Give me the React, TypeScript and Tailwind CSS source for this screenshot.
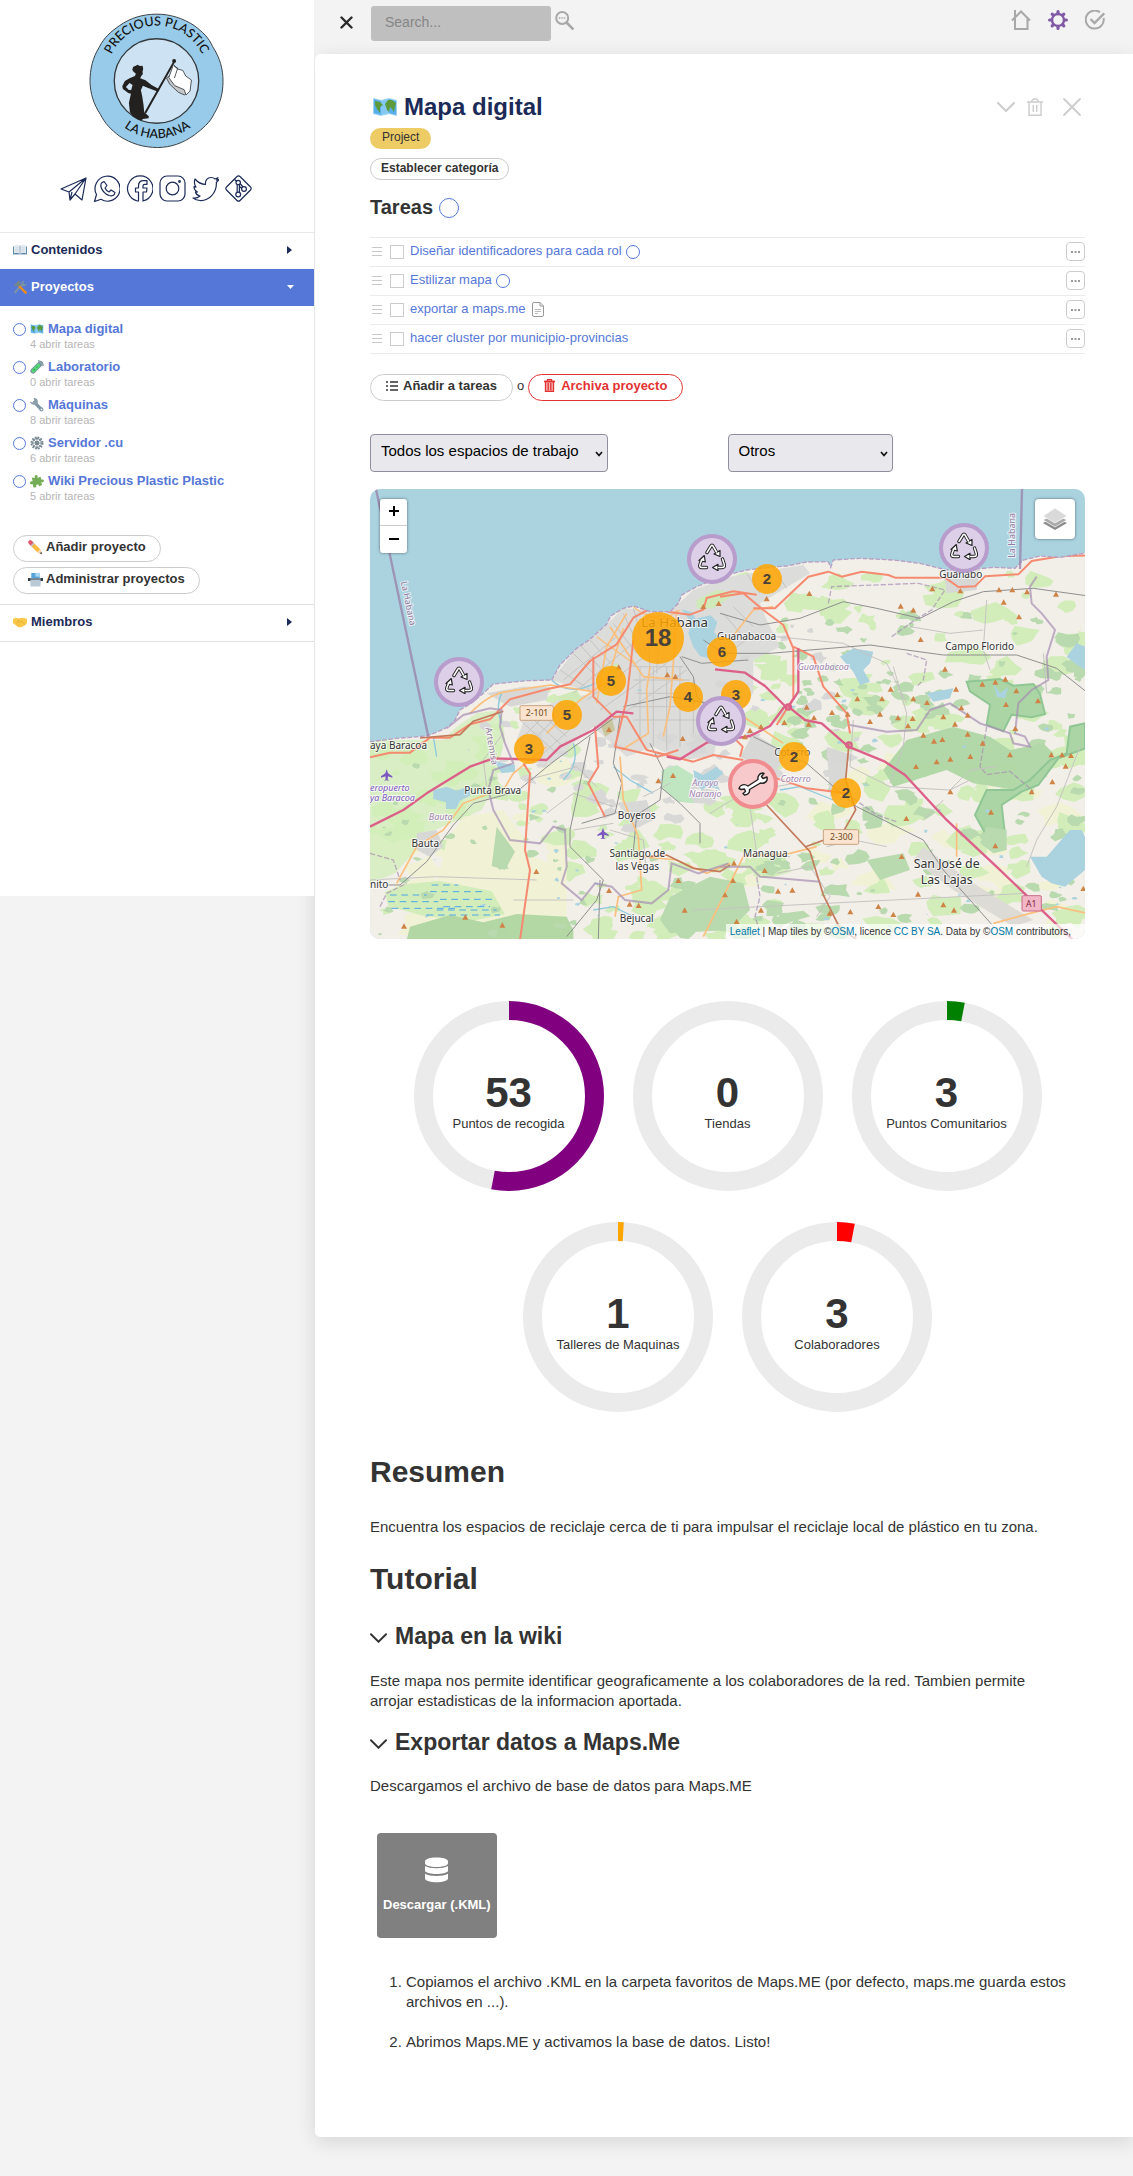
import React from "react";

type IconProps = { className?: string };

/* ---------- Emoji style icons ---------- */

const MapEmoji = ({ className = "size-[14px]" }: IconProps) => (
  <svg viewBox="0 0 26 22" className={className} aria-hidden="true">
    <path d="M1 2l8 2 8-2 8 2v16l-8-2-8 2-8-2z" fill="#9cd5f3" />
    <path d="M2 3l7 2v14l-7-2zM17 3l7 2v14l-7-2z" fill="#58aeea" />
    <path d="M9 5l8-2v14l-8 2z" fill="#86c8f4" />
    <path d="M3 5l5 1 3 3-3 2 0 6-3-4-2-4zM13 8l3-4 4 0 4 3-1 4-1 5-2-3-2-2-1 5-2-2z" fill="#5c9a3c" />
  </svg>
);

const BookEmoji = () => (
  <svg viewBox="0 0 16 14" className="h-[14px] w-[14px]" aria-hidden="true">
    <path d="M0 3h16v9H0z" fill="#4d7d9e" />
    <path d="M1 2c3-1.500 5-1 7 0 2-1 4-1.500 7 0v9c-3-1-5-.5-7 .5-2-1-4-1.500-7-.5z" fill="#e3eaf0" />
    <path d="M8 2v9.500" stroke="#93a6b6" />
    <path d="M2.500 4.500h4M2.500 6.500h4M2.500 8.500h4M9.500 4.500h4M9.500 6.500h4M9.500 8.500h4" stroke="#c4d0da" strokeWidth=".7" />
  </svg>
);

const ToolsEmoji = () => (
  <svg viewBox="0 0 16 16" className="size-[14px]" aria-hidden="true">
    <path d="M3 13l8-8" stroke="#7d95a3" strokeWidth="2.400" />
    <path d="M13 1a3 3 0 0 0-3 4l2 2a3 3 0 0 0 3.500-3.500L13.500 5 11.500 4z" fill="#7d95a3" />
    <path d="M1 14.500l2-3 2 2-3 2z" fill="#7d95a3" />
    <path d="M6 6l8.500 8.500" stroke="#f08d1c" strokeWidth="2.800" strokeLinecap="round" />
    <path d="M1 6l5-5 4 1-2 1.500 1 2L6 8 4 6 2.500 7.500z" fill="#75868d" />
  </svg>
);

const TubeEmoji = () => (
  <svg viewBox="0 0 16 16" className="size-[14px]" aria-hidden="true">
    <path d="M3.500 12.500l8.500-8.500" stroke="#76919b" strokeWidth="6" strokeLinecap="round" />
    <path d="M3.800 12.200l6-6" stroke="#55d878" strokeWidth="4" strokeLinecap="round" />
    <path d="M10 1l5 5" stroke="#8fa4ac" strokeWidth="2" strokeLinecap="round" />
    <circle cx="5" cy="11" r="1" fill="#28a64e" />
    <circle cx="8" cy="8" r=".8" fill="#28a64e" />
  </svg>
);

const WrenchEmoji = () => (
  <svg viewBox="0 0 16 16" className="size-[14px]" aria-hidden="true">
    <path d="M5 5l8 8" stroke="#7e96a5" strokeWidth="3.600" strokeLinecap="round" />
    <path d="M0 4l3 1 2-2-1-3c4-.5 6 3 4.500 6.500C5 9 .5 7.500 0 4z" fill="#8ca0ac" />
    <circle cx="13" cy="13" r="2.400" fill="#8ca0ac" />
    <circle cx="13.200" cy="13.200" r=".9" fill="#fff" />
  </svg>
);

const GearEmoji = () => (
  <svg viewBox="0 0 16 16" className="size-[14px]" aria-hidden="true" stroke="#738590" fill="none">
    <circle cx="8" cy="8" r="5" strokeWidth="1.200" />
    <circle cx="8" cy="8" r="1.800" fill="#738590" />
    <path d="M8 1v14M1 8h14M3 3l10 10M13 3L3 13" strokeWidth="1" />
    <circle cx="8" cy="8" r="6.600" strokeWidth="1.600" strokeDasharray="2 1.450" />
  </svg>
);

const PuzzleEmoji = () => (
  <svg viewBox="0 0 16 16" className="size-[14px]" aria-hidden="true">
    <path d="M2 4l3.500.5C5 2 6 1 7.500 1.200 9 1.500 9 3 8.500 4.500L12 3l1 3.500c2-.8 3 0 2.800 1.500-.3 1.500-1.500 1.700-3 1l1 3.500-3.300 1.500c-.5-2-2-2.500-3-1.500s-.5 2.500.5 2.700L4 15.500l-1-4c-1.500.5-3 .2-3-1.300S1.500 8 3 8.500z" fill="#74ad56" />
  </svg>
);

const PencilEmoji = () => (
  <svg viewBox="0 0 16 16" className="size-[15px]" aria-hidden="true">
    <path d="M2.500 2.500l2 2" stroke="#e5586a" strokeWidth="4.500" strokeLinecap="round" />
    <path d="M4.300 4.300l1.400 1.400" stroke="#b9c4cc" strokeWidth="4.500" />
    <path d="M5.500 5.500l6 6" stroke="#f7b93e" strokeWidth="4.500" />
    <path d="M13.500 9.500L15 15l-5.500-1.500z" fill="#f5d5b0" />
    <path d="M14.300 12.500L15 15l-2.500-.7z" fill="#444" />
  </svg>
);

const CardEmoji = () => (
  <svg viewBox="0 0 16 16" className="size-[15px]" aria-hidden="true">
    <path d="M3.500 1h9v6h-9z" fill="#56a4d9" />
    <path d="M8 1h4.500v4H8z" fill="#a9d8f4" />
    <path d="M2 7h12l-.8 8.500H2.800z" fill="#b9c9d6" />
    <path d="M0 6.500h2.500v3H0zM13.500 6.500H16v3h-2.500z" fill="#2f3d46" />
    <path d="M2 7.500h12" stroke="#2f3d46" />
  </svg>
);

const HandshakeEmoji = () => (
  <svg viewBox="0 0 16 16" className="size-[14px]" aria-hidden="true">
    <path d="M0 4.500l3-1.500 4 1 3-1 3 .3 3 1.200V9l-2 2.500-4 2.500H6l-3.500-3L0 9.500z" fill="#fbc84a" />
    <path d="M7 5L5 8l2 .5L9.500 7l4 4M3.500 10.500l1.500-1M5.500 12.500l1.500-1.500" stroke="#e0a02c" strokeWidth=".8" fill="none" />
  </svg>
);

/* ---------- Logo ---------- */

const Logo = () => (
  <svg viewBox="266 40 406 408" className="h-[136px] w-[135px]" role="img" aria-label="Precious Plastic La Habana">
    <path
      d="M470 43c40 0 78 12 112 34 26 20 44 36 56 64 22 34 31 66 31 104 0 36-8 66-27 98-12 26-34 44-60 64-34 24-70 37-110 37-42 0-80-12-114-34-26-20-44-38-58-66-20-30-30-62-31-98 0-38 8-72 28-104 14-28 34-46 60-64 34-24 71-35 113-35z"
      fill="#98cbe9"
      stroke="#3c4246"
      strokeWidth="3"
    />
    <circle cx="469" cy="244" r="127" fill="#cde3f3" stroke="#33383c" strokeWidth="4" />
    <path id="logo-top" d="M322 200A150 150 0 0 1 617 200" fill="none" />
    <path id="logo-bottom" d="M345 361A173 173 0 0 0 598 361" fill="none" />
    <text fontFamily="Lato, 'Open Sans', sans-serif" fontSize="38" fontWeight="500" fill="#111" textAnchor="middle">
      <textPath href="#logo-top" startOffset="50%">PRECIOUS PLASTIC</textPath>
    </text>
    <text fontFamily="Lato, 'Open Sans', sans-serif" fontSize="38" fontWeight="500" fill="#111" textAnchor="middle">
      <textPath href="#logo-bottom" startOffset="50%">LA HABANA</textPath>
    </text>
    <path
      d="M396 210L399 201 407 198 412 195 419 199 427 198 429 207 427 216 428 223 423 229 420 236 436 242 454 256 472 266 478 270 474 276 460 271 442 264 428 258 422 272 426 290 430 316 432 338 446 350 445 356 428 358 424 363 412 360 398 350 389 338 386 310 392 282 384 280 368 268 366 260 374 244 388 236 404 229 407 222 400 216z"
      fill="#232120"
    />
    <path d="M377 262L388 250 397 256 393 271 386 271z" fill="#cde3f3" />
    <path d="M521 188l-86 152" stroke="#232120" strokeWidth="6" />
    <circle cx="522" cy="184" r="6" fill="#232120" />
    <path d="M499 235l13-9 20 6 36 12-2 30-13 12-18-8-26-24z" fill="#c5c8ca" stroke="#33383c" strokeWidth="2.500" />
    <path d="M520 194l12 14 16 4 9 17 17 12-4 33-12 12-6-16-28-12-18-24z" fill="#fff" stroke="#33383c" strokeWidth="2.500" />
    <path d="M522 200l11 5-10 30" fill="none" stroke="#33383c" strokeWidth="2.500" />
  </svg>
);

/* ---------- Social icons ---------- */

const socials = [
  {
    name: "Telegram",
    body: <path d="M1 14L26 3l-4 22-7-6-5 6-1-8zM9 17L26 3 15 19M10 25l2-8" />,
  },
  {
    name: "WhatsApp",
    body: (
      <path d="M1.500 26.500l2-7A12.500 12.500 0 1 1 8 24.300zM8.500 8l2.500-1.500 3 4-2 2.500c.8 1.700 2 3 4 4l2-2 4 2.500c-.5 3-3 4-6 3C12.500 19 9 15.500 8 12c-.3-1.500-.2-3 .5-4z" />
    ),
  },
  {
    name: "Facebook",
    body: (
      <path d="M11.500 26A12.700 12.700 0 1 1 17 26V17h3.500l.5-4h-4v-2c0-1 .5-1.700 1.700-1.700H21V5.700h-3.500C14 5.700 12.500 7.500 12.500 11v2H9.500v4h3v9z" />
    ),
  },
  {
    name: "Instagram",
    body: (
      <>
        <rect x="1" y="1" width="25" height="25" rx="7" />
        <circle cx="13.500" cy="13.500" r="6.300" />
        <circle cx="20.500" cy="6.500" r=".8" />
      </>
    ),
  },
  {
    name: "Twitter",
    body: (
      <path d="M1 23c3 .5 5-.3 7-2-2.500-.5-4-2-4.500-4h2C3.500 16 2 14 2 11.500l2 .6C2.500 10 2 7 3 4c3 3.500 6 5.300 10.500 5.500C13 5 15.500 2.500 19 2.500c1.500 0 3 .5 4 1.500l3-1.300-1.500 2.500L27 4.500c-.8 1.200-1.500 2-2.600 2.800C24.800 18 17 26 8 25.500 5.500 25.300 3 24.500 1 23z" />
    ),
  },
  {
    name: "Git",
    body: (
      <>
        <path d="M12 1.500a2 2 0 0 1 3 0L25.500 12a2 2 0 0 1 0 3L15 25.500a2 2 0 0 1-3 0L1.500 15a2 2 0 0 1 0-3z" />
        <path d="M12.200 9.500v7.700M14.400 9.500v7.700M15 8.500l3 3.500M14.500 11.500l2.500 2M9.500 4.500l2.500 2" />
        <circle cx="13.200" cy="7.500" r="2.200" />
        <circle cx="13.200" cy="19.500" r="2.400" />
        <circle cx="19" cy="14" r="2.400" />
      </>
    ),
  },
];

/* ---------- Small UI icons ---------- */

const Ring = ({ className = "" }: IconProps) => (
  <span className={`inline-block shrink-0 rounded-full border border-[#5577d8] ${className}`} />
);

const TrashIcon = ({ className = "" }: IconProps) => (
  <svg viewBox="0 0 16 18" className={className} fill="none" stroke="currentColor" strokeWidth="1.400" aria-hidden="true">
    <path d="M0 4h16M2 4v13.200h12V4M5 4V2.500L6.500 1h3L11 2.500V4M6.300 7v7M9.700 7v7" />
  </svg>
);

const ChevronDown = ({ className = "" }: IconProps) => (
  <svg viewBox="0 0 18 10" className={className} fill="none" stroke="currentColor" strokeWidth="2" strokeLinecap="round" aria-hidden="true">
    <path d="M1 1l8 8 8-8" />
  </svg>
);

/* ---------- Sidebar ---------- */

const projects = [
  { icon: <MapEmoji />, name: "Mapa digital", open: 4 },
  { icon: <TubeEmoji />, name: "Laboratorio", open: 0 },
  { icon: <WrenchEmoji />, name: "Máquinas", open: 8 },
  { icon: <GearEmoji />, name: "Servidor .cu", open: 6 },
  { icon: <PuzzleEmoji />, name: "Wiki Precious Plastic Plastic", open: 5 },
];

const Sidebar = () => (
  <aside className="relative z-10 min-h-[896px] w-[314px] shrink-0 self-start bg-white pt-[13px] text-[13px] font-bold">
    <div className="flex justify-center pr-[2px]">
      <Logo />
    </div>
    <nav className="mt-[26px] flex justify-center gap-[6px] pr-[2px]" aria-label="Redes sociales">
      {socials.map((s) => (
        <a key={s.name} href="#" aria-label={s.name}>
          <svg viewBox="0 0 27 27" className="size-[27px]" fill="none" stroke="#1b2a57" strokeWidth="1.200" strokeLinejoin="round">
            {s.body}
          </svg>
        </a>
      ))}
    </nav>
    <button className="mt-[30px] flex h-[37px] w-full items-center gap-1 border-t border-[#e8e8e8] pb-[2px] pl-[13px] pr-[22px] text-[#1b2a57]">
      <BookEmoji />
      Contenidos
      <svg viewBox="0 0 5 8" className="ml-auto h-2 w-[5px]" fill="currentColor" aria-hidden="true"><path d="M0 0l5 4-5 4z" /></svg>
    </button>
    <button className="flex h-[37px] w-full items-center gap-1 bg-[#5577d8] pb-[2px] pl-[13px] pr-5 text-white">
      <ToolsEmoji />
      Proyectos
      <svg viewBox="0 0 7 4" className="ml-auto h-1 w-[7px]" fill="currentColor" aria-hidden="true"><path d="M0 0h7l-3.500 4z" /></svg>
    </button>
    <ul className="mt-[15px] flex flex-col gap-2 pl-[13px]">
      {projects.map((p) => (
        <li key={p.name} className="flex gap-1">
          <Ring className="mt-[2px] size-[13px]" />
          <div>
            <a href="#" className="flex items-center gap-1 leading-4 text-[#5577d8]">
              {p.icon}
              {p.name}
            </a>
            <p className="text-[11px] leading-[14px] font-normal text-[#b5b5b5]">{p.open} abrir tareas</p>
          </div>
        </li>
      ))}
    </ul>
    <div className="mt-8 flex flex-col items-start gap-[5px] pb-[10px] pl-[13px] text-[#333]">
      <button className="flex h-[27px] items-center gap-[3px] rounded-full border border-[#ccc] px-[14px] pb-[3px]">
        <PencilEmoji />
        Añadir proyecto
      </button>
      <button className="flex h-[27px] items-center gap-[3px] rounded-full border border-[#ccc] px-[14px] pb-[3px]">
        <CardEmoji />
        Administrar proyectos
      </button>
    </div>
    <button className="flex h-[38px] w-full items-center gap-1 border-y border-[#e0e0e0] pb-[2px] pl-[13px] pr-[22px] text-[#1b2a57]">
      <HandshakeEmoji />
      Miembros
      <svg viewBox="0 0 5 8" className="ml-auto h-2 w-[5px]" fill="currentColor" aria-hidden="true"><path d="M0 0l5 4-5 4z" /></svg>
    </button>
  </aside>
);

/* ---------- Top bar ---------- */

const TopBar = () => (
  <header className="flex h-[54px] items-start pr-7 pl-[25px]">
    <button aria-label="Cerrar menú" className="mt-4">
      <svg viewBox="0 0 13 13" className="size-[13px]" stroke="#2b2b2b" strokeWidth="2.400" strokeLinecap="round"><path d="M1.500 1.500l10 10M11.500 1.500l-10 10" /></svg>
    </button>
    <input
      type="search"
      aria-label="Search"
      placeholder="Search..."
      className="mt-[6px] ml-[18px] h-[35px] w-[180px] rounded-[3px] bg-[#bfbfbf] px-[14px] pb-1 text-[14px] placeholder:text-[#858585]"
    />
    <button aria-label="Buscar" className="mt-[11px] ml-1">
      <svg viewBox="0 0 19 19" className="size-[19px]" fill="none" stroke="#a8a8a8" strokeWidth="2">
        <circle cx="7.200" cy="7" r="6" />
        <path d="M11.500 11.500l7 7" strokeWidth="2.600" />
        <path d="M3.800 7h7" strokeWidth="1.500" strokeDasharray="1.500 1" />
      </svg>
    </button>
    <div className="mt-[10px] ml-auto flex gap-[17px]">
      <button aria-label="Inicio">
        <svg viewBox="0 0 20 20" className="size-5" fill="none" stroke="#a8a8a8" strokeWidth="2"><path d="M1 10.500L10 1.500l9 9M4 8.500V19h12.500V8.500M4 9V0" /></svg>
      </button>
      <button aria-label="Ajustes">
        <svg viewBox="0 0 20 20" className="size-5" fill="none" stroke="#8159a6">
          <circle cx="10" cy="10" r="6" strokeWidth="2.400" />
          <g strokeWidth="3.200" strokeLinecap="round">
            <path d="M10 1.600v2M10 16.400v2M1.600 10h2M16.400 10h2M4.200 4.200l1 1M14.800 14.800l1 1M15.800 4.200l-1 1M5.200 14.800l-1 1" />
          </g>
        </svg>
      </button>
      <button aria-label="Tareas">
        <svg viewBox="0 0 20 20" className="size-5" fill="none" stroke="#a8a8a8" strokeWidth="2">
          <path d="M15 2.300A9 9 0 1 0 18.600 8" />
          <path d="M5.500 9l4 4L19.300 3.300" strokeWidth="2.400" />
        </svg>
      </button>
    </div>
  </header>
);

/* ---------- Tasks ---------- */

const tasks = [
  { text: "Diseñar identificadores para cada rol", mark: "ring" },
  { text: "Estilizar mapa", mark: "ring" },
  { text: "exportar a maps.me", mark: "doc" },
  { text: "hacer cluster por municipio-provincias", mark: "" },
];

const TaskList = () => (
  <ul className="mt-[14px] border-t border-[#ebebeb]">
    {tasks.map((t, i) => (
      <li key={t.text} className="flex h-[29px] items-center border-b border-[#ebebeb] pb-px pl-[2px]">
        <svg viewBox="0 0 10 9" className="h-[9px] w-[10px] text-[#c8c8c8]" stroke="currentColor" aria-hidden="true"><path d="M0 .5h10M0 4.500h10M0 8.500h10" /></svg>
        <input id={`task-${i}`} type="checkbox" className="mr-[6px] ml-2 size-[14px] appearance-none border border-[#ccc]" />
        <label htmlFor={`task-${i}`} className="pb-[2px] text-[13px] text-[#5577d8]">{t.text}</label>
        {t.mark === "ring" && <Ring className="ml-1 size-[14px]" />}
        {t.mark === "doc" && (
          <svg viewBox="0 0 12 15" className="ml-[6px] h-[15px] w-3" fill="none" stroke="#999" aria-hidden="true">
            <path d="M2 .5h6l3.500 3.500v9a1.500 1.500 0 0 1-1.500 1.500H2A1.500 1.500 0 0 1 .5 13V2A1.500 1.500 0 0 1 2 .5zM8 .5V4h3.500" />
            <path d="M3 7.500h6M3 9.500h6M3 11.500h3" stroke="#aaa" strokeWidth=".8" />
          </svg>
        )}
        <button aria-label="Más opciones" className="ml-auto flex size-[19px] items-center justify-center rounded-[4px] border border-[#ccc]">
          <svg viewBox="0 0 9 2" className="h-[2px] w-[9px]" fill="#999"><path d="M0 0h2v2H0zM3.500 0h2v2h-2zM7 0h2v2H7z" /></svg>
        </button>
      </li>
    ))}
  </ul>
);

const SelectBox = ({ id, label, options, className }: { id: string; label: string; options: string[]; className: string }) => (
  <div className={`relative ${className}`}>
    <label htmlFor={id} className="sr-only">{label}</label>
    <select id={id} className="h-[38px] w-full appearance-none rounded-[4px] border border-[#8f8f9d] bg-[#e9e9ed] pr-5 pb-1 pl-[10px] text-[15px] text-black">
      {options.map((o) => <option key={o}>{o}</option>)}
    </select>
    <svg viewBox="0 0 8 6" className="pointer-events-none absolute top-[17px] right-[5px] h-[6px] w-2" fill="none" stroke="#111" strokeWidth="1.700" aria-hidden="true"><path d="M1 1l3 3.500L7 1" /></svg>
  </div>
);

/* ---------- Map ---------- */

/* Deterministic generator for the small vegetation and field patches. */
const makeRandom = (seed: number) => () => {
  seed = (seed * 16807) % 2147483647;
  return seed / 2147483647;
};

const blob = (rnd: () => number, x: number, y: number, r: number) => {
  const pts: string[] = [];
  const n = 9;
  for (let i = 0; i < n; i++) {
    const a = (i / n) * Math.PI * 2;
    const k = r * (0.45 + rnd() * 0.75);
    pts.push(`${Math.round(x + Math.cos(a) * k * 1.3)} ${Math.round(y + Math.sin(a) * k * 0.8)}`);
  }
  return `M${pts.join("L")}z`;
};

const scatter = (seed: number, count: number, x0: number, y0: number, x1: number, y1: number, r0: number, r1: number) => {
  const rnd = makeRandom(seed);
  let d = "";
  for (let i = 0; i < count; i++) {
    const x = x0 + rnd() * (x1 - x0);
    const y = y0 + rnd() * (y1 - y0);
    d += blob(rnd, x, y, r0 + rnd() * (r1 - r0));
  }
  return d;
};

const meadows =
  scatter(11, 60, 30, 780, 700, 1377, 12, 52) +
  scatter(23, 150, 1150, 270, 2175, 1377, 12, 50) +
  scatter(31, 60, 700, 930, 1250, 1377, 12, 42) +
  scatter(37, 14, 400, 620, 640, 760, 8, 22);
const fields = scatter(41, 20, 100, 880, 640, 1377, 25, 75) + scatter(43, 22, 1150, 850, 2175, 1377, 22, 60);
const woods =
  scatter(53, 34, 60, 850, 700, 1377, 5, 18) +
  scatter(59, 110, 1250, 380, 2175, 1377, 6, 28) +
  scatter(61, 26, 880, 1130, 1450, 1377, 10, 38) +
  scatter(67, 26, 1300, 560, 1800, 760, 8, 26);
const suburbs = scatter(71, 34, 650, 760, 1080, 1050, 8, 32) + scatter(73, 24, 1080, 430, 1500, 900, 6, 24) + scatter(79, 14, 380, 600, 650, 950, 8, 24);
const ponds = scatter(83, 50, 200, 620, 2150, 1370, 2, 8);

const COAST =
  "M10 788L110 775 150 772 200 768 240 752 265 740 285 720 300 690 330 672 370 640 400 612 440 608 500 602 575 600 600 555 650 505 690 478 740 432 752 408 790 385 822 378 870 395 930 395 955 370 965 345 1010 320 1060 300 1100 285 1160 270 1225 262 1280 258 1340 246 1405 245 1412 262 1420 240 1500 235 1600 240 1680 250 1760 270 1840 268 1900 262 1965 265 1990 240 2040 228 2100 232 2195 216";
const LAND = `${COAST}V1400H10z`;

const peaks: [number, number][] = [
  [1030, 380], [1076, 371], [922, 585], [946, 590], [776, 562], [968, 776], [939, 887], [895, 903], [747, 749], [529, 1175], [316, 1312], [132, 1339], [427, 1336],
  [747, 1232], [809, 1273], [836, 1277], [955, 1202], [974, 1291], [1095, 1245], [1220, 357], [1348, 341], [1622, 379], [1660, 391], [1717, 327], [1801, 333],
  [1917, 330], [1957, 330], [2001, 336], [2088, 343], [1931, 367], [1977, 411], [1682, 479], [1755, 568], [1592, 628], [1432, 644], [1492, 657], [1566, 657],
  [1660, 657], [1701, 668], [1788, 628], [1867, 613], [1906, 607], [1936, 598], [1969, 633], [2034, 663], [1938, 674], [1804, 684], [1823, 706], [1750, 711],
  [1785, 733], [1560, 703], [1614, 714], [1658, 716], [1644, 738], [1530, 725], [1463, 703], [1416, 698], [1362, 714], [1346, 733], [1340, 682], [1273, 728],
  [1203, 741], [1170, 752], [1155, 771], [1690, 766], [1722, 784], [1747, 779], [1823, 763], [1868, 790], [1966, 746], [1831, 830], [1771, 838], [1730, 846],
  [1668, 860], [1950, 825], [2074, 825], [2106, 825], [2133, 827], [2117, 859], [2077, 906], [2015, 936], [1893, 997], [1906, 1098], [1771, 936], [1639, 1016],
  [1625, 1130], [1122, 1150], [1119, 1202], [1214, 1172], [1254, 1234], [1297, 1231], [1674, 1243], [1555, 1280], [1600, 1304], [1750, 1275], [1782, 1291],
  [1471, 1296], [1409, 1300], [1203, 1291], [1130, 1325], [2170, 1226],
];

const MapDrawing = () => (
  <svg viewBox="30 27 2145 1350" preserveAspectRatio="xMidYMid slice" className="absolute inset-0 size-full" role="img" aria-label="Mapa de La Habana">
    <defs>
      <clipPath id="land"><path d={LAND} /></clipPath>
    </defs>
    <rect x="30" y="27" width="2145" height="1350" fill="#aad3df" />
    <path d={LAND} fill="#f2efe9" />
    <g clipPath="url(#land)">
      <path d={fields} fill="#f1f2d5" />
      <path d={meadows} fill="#d2edba" />
      <path d="M30 780h220l40-40 60-40 75-10 10 90-30 60 10 60-50 90-140 60-120 130-75 30z" fill="#d2edba" opacity=".75" />
      <path d="M310 1010l120-20 60 80 20 60 60 20 50-60v240H180l60-160 20-90z" fill="#f1f2d5" />
      <path d="M410 1040l55 75-30 55-40-12z" fill="#b9d9af" />
      <path d="M75 1235l60-22 100-10 160 30 40 70-90 18-150-12-110-30z" fill="#d2edba" />
      <path d="M150 1340l120-35 100 22 100-25 150 8 20 40v30H140z" fill="#b3d8a4" />
      <path d={woods} fill="#b9d9af" />

      {/* Built-up area */}
      <path
        d="M575 600L650 505 740 432 790 385 930 395 1000 330 1110 290 1330 255 1350 280 1200 370 1220 420 1260 500 1180 540 1180 640 1140 700 1080 740 1060 830 960 840 880 800 800 830 700 740 640 790 580 850 500 850 470 780 500 700 600 660 700 640z"
        fill="#dcdcda"
      />
      <path d={suburbs} fill="#d8d8d7" />
      <path d="M380 640l110-20 80 0-10 40-110 20z M170 1060l60-10 20 50-40 30-40-20z M1750 270l110 0-10 60-90 10z M780 970l80-10 20 60-60 30z M1400 800l60 20 0 120-50 10z M1180 760l100 60-40 70-100-60z" fill="#d8d8d6" />
      <path d="M1690 1100l150 110 180 110-60 20-180-110-120-90z" fill="#dddbd5" />
      <path d="M590 650l60-20 20 30-50 20zM735 560l40-10-5 80-40 20zM1010 360l60-30 60 10-70 45-50 0z" fill="#cfe9b8" />

      {/* Parks and protected areas */}
      <path d="M905 870l45-15 50 30-15 60 20 25-50-5-50-40z" fill="#bfe6c0" />
      <path d="M720 730l35-15 10 35-30 20z" fill="#c9c69d" />
      <path d="M1640 780l140-40 110 30 60 40 100-20 30 30-20 70-90 40-130-20-80-40-160 50-30-50z" fill="#b3d8a8" />
      <g fill="#abd5a4" stroke="#90c695" strokeWidth="6">
        <path d="M1820 605l100-8 40 20 60-5 20 30 15 60-40 10-60-8-25 50-50-20 10-60-60-40z" />
        <path d="M1880 930l80 0 50-30 60-60 50-20 10-80 45-10v75l-80 30-60 80-50 20-60 40 10 90-40 30-50-90z" />
      </g>
      <path d="M1880 1040l60 10 0 60-40 10-40-30z M1520 1140l110-20 20 50-90 30z M930 1250l120-60 100 20 20 80-60 60-180 10-30-40z" fill="#b9d9af" />

      {/* Water */}
      <g fill="#aad3df">
        <path d="M965 388l30 8 12 20 45-10 20 20-10 30 18 20-40 20 10 40-30-8-20-28-15-40 10-30z" />
        <path d="M220 930l40-10 30 12 40-15 0 30-30 15-12 25-30 0 0-20-38-10z" />
        <path d="M400 840l30 10 35 5 0 20-40 5z" />
        <path d="M1000 870l30 15 40-25 20 20-25 20 15 30-35-12-20 12-20-25z" />
        <path d="M1440 530l40-25 60 10-10 35-20 20 20 35-30 10-20-40z" />
        <path d="M1700 640l80-15-10 30-50 10zM1900 610l20 30 25-20-10 35-25-5z" />
        <path d="M2120 530l30-40 25 10v70l-30-20z" />
        <path d="M2010 1130l50 0 70-80 35 0 10 20v100l-60 50-40-10-30-20z" />
        <path d={ponds} />
      </g>
      <g stroke="#4fa8e8" strokeWidth="3" strokeDasharray="20 14">
        <path d="M90 1245h110M85 1265h150M95 1285h200M215 1215h80M210 1235h160M240 1258h160M250 1280h140M200 1305h220M230 1290h180" />
      </g>
      <path d="M575 600q50 50 130 10M425 640q-20 40 0 90M220 770l10 60M640 790q20 60-30 110M760 860l50 40 70 40M1260 930l60-10 100 40M700 1290l60-10 80 40" fill="none" stroke="#8ec9dd" strokeWidth="4" />

      {/* Street grid */}
      <g fill="none" stroke="#c6c4c2" strokeWidth="3">
        <path d="M640 520l70 70M665 500l70 80M690 480l80 90M600 570l90 60M760 430l70 90M790 400l60 130M820 385l40 140M860 400l10 170M900 400l-10 180M610 600l160-130M640 640l190-160M680 660l200-150M720 690l200-140M760 720l220-150M820 560h150M820 600h170M830 640h150M820 680h180M820 720h200M840 560v220M880 560v240M920 560v250M960 560v240M1000 600v160M1090 400l60 70M1120 380l60 60M1160 280l40 60M1200 270l40 70M1240 265l40 60M1080 540l90-70M480 720l110 100M500 700l110 100M520 680l100 90M490 810l120-120M470 790l100-100M550 820l100-90" />
        <path d="M430 760l-60 80 10 80M500 900l150-40 60 60M560 1000l80-60 120 40M30 1200l200-10 300 10M640 1050l120-20M850 950l80-40M1050 1000l100-60 150-30M1170 980l20 140 100 10M1250 470l200 20 130 60 60 120M1480 720l-10 140 120 60 180 10 60-30M1880 360l-10 150 20 60M2050 520l10 120M2160 800l-70 180-60 100-30 80M1600 560l40 140-10 100-40 110M1650 440l120 20 100-10M1250 1180l100-20 60 90-40 60M1400 1100l80-20 100 20M1770 930l60-60 80-10M1690 1020l60-60M750 1050l100 30 10 100M1000 1290l1000-50M460 1260h180" />
      </g>

      {/* Railways */}
      <g fill="none" stroke="#8f8f8f" strokeWidth="3">
        <path d="M80 1215h40l80-70 80-110 60-65 130-35 110-90 180-130M780 710l-20 140 25 60-20 90-100 30M690 770l-60 280 0 50 100 100-20 60-90 110M720 1200l-5 180M790 680l140-30 120 20 60 90M960 530l40 60 10 60 60 60M965 530l60 20 140-10M1080 400l120 35 120-20 130-50 100 20 130 30 100-50 90-30 150-10 180 25 100 20" />
        <path d="M870 790l40 80-10 90-70 45-10 110M900 920l60 50 60 60 0 60M1030 480l60 40 140 0 300-25 220 30 220 0 120 40 190 150M1180 770l160 80 150 130 200 100 60 90 160 180" />
      </g>

      {/* Secondary and primary roads */}
      <g fill="none" stroke="#fbbf7d" strokeWidth="5">
        <path d="M330 700q60-60 110-65l130-20 130 20 50-60 40-130M560 760l100-100 90-60M800 400l-60 100-30 170M870 560l-10 70 5 130-80 50M780 830l10 130 45 110 10 160-70 20-10 60M110 1210l60-110 80-50 60-80 80-30M430 930l30-50 100-80M950 390l-10 160-10 130-20 90M750 440l100 150 120 10M850 1130l100 10 90 40 70-30M1110 480l70-90 60-10M1120 690l90 60 60 40M1030 1370l120-240 140-10 80-20M1790 1030l0 100M1900 1330l110-30 80-20 90 20" />
        <path d="M820 380q70 60 140 10M710 470l110 80" strokeWidth="4" />
      </g>
      <g fill="none" stroke="#f58a70" strokeWidth="6" strokeLinejoin="round">
        <path d="M30 832l60-14 60 0 60-45 60 0 60-40 60-15 60-60 110-30 70-15 60-70 80-50 50-80 60-32 50 15 60 8 40-15 10-35 80-20 70 10M1080 350l70-10 60 50 60 45 30 70 0 150-50 80M700 530l0 120 60 60 40 0 60 100 60 15 80 20 60-20 90 15" />
        <path d="M1180 385l65 0 100-95 60-15 40 15 60-15 80 10 20 8 150 0 40 28 50-2 30-30 100-6 40-40 90-15 80-2M820 480l-20 180-35 140 130 30 60-20M705 740l10 120-30 50 50 100M490 850l20 30-15 230 15 60-20 140-10 70M1300 500l60 30 30 90 70 80 10 60M1250 895l90 30 120 15M1140 830l8-30-30-30" />
      </g>
      <g fill="none" stroke="#c27a5a" strokeWidth="5">
        <path d="M1467 790l-10 110 30 90-40 70-110 40M1220 975l130 140 40 130 50 100 60 40M180 774l120-10 40-40 90-30M860 1130l60-5 80 40 80 10 30-20" />
      </g>
      <g fill="none" stroke="#dc6089" strokeWidth="7" strokeLinejoin="round">
        <path d="M30 1040l100-50 70-50 130-80 70-25 160 5 40-40 100-50 70-55 50 5M920 830l40 8 80-50 130-20 60-30 45-60-60-60-60-40-90-10M1285 680l30-45 0-130M1285 680l50 40 50 10 80 70 110 45 60 40 120 130 160 150 260 250" />
        <circle cx="1285" cy="681" r="8" /><circle cx="1467" cy="795" r="8" />
      </g>

      {/* Municipal boundaries */}
      <g fill="none" stroke="#a78fb3" strokeWidth="6" opacity=".7">
        <path d="M260 745l50-40 80-20 35 5-5 50 15 50 25 60-60 20-15 60 15 60 50 90 90 10 40-50 35 10 5 110-15 50 60 50 40-50 50 10 40 40 80 10 50-40 10-80 80 30 90-30M1470 735l110 20 90-5 40-60 60-20 90 60 90 30 10 30 50 10-15-30-30-10 10-90 40-40 50-30-5-70 25-80-40-50-30-30-5-50 20-30M1080 1160l90 0 30 30 180 15" />
        <path d="M30 1120l70 20 20 60M60 1280l20-40 60-30M1190 1190l10 60-15 60 20 60M1880 740l-20 120 20 24 70-10 70 60M1595 470l70-50 50-30 40-60-80-20-260 10-10 50M1640 520l60 20-10 60-20 20M1480 955l70 50 60 20" strokeDasharray="16 6" strokeWidth="4" />
      </g>
    </g>
    <path d={COAST} fill="none" stroke="#b79fc4" strokeWidth="4" strokeDasharray="14 5" />
    <path d="M48 27L205 770M1986 27l-6 240" fill="none" stroke="#9b84ab" strokeWidth="7" opacity=".8" />
    <path d={peaks.map(([x, y]) => `M${x - 9} ${y + 7}l9-16 9 16z`).join("")} fill="#cf8447" />

    <g fill="#7b57bf">
      <path d="M80 868l4 12 13 9v4l-13-4-1 9 5 4-8-1-8 1 5-4-1-9-13 4v-4l13-9z" />
      <path d="M729 1043l4 12 13 9v4l-13-4-1 9 5 4-8-1-8 1 5-4-1-9-13 4v-4l13-9z" />
    </g>

    {/* Place names */}
    <g fontFamily="'Noto Sans', sans-serif" textAnchor="middle" stroke="#fff" strokeOpacity=".7" strokeWidth="6" paintOrder="stroke" strokeLinejoin="round">
      <g fill="#333" fontSize="30">
        <text x="30" y="807" textAnchor="start">aya Baracoa</text>
        <text x="398" y="943">Punta Brava</text>
        <text x="196" y="1101">Bauta</text>
        <text x="30" y="1224" textAnchor="start">nito</text>
        <text x="830" y="1017">Boyeros</text>
        <text x="832" y="1132">Santiago de</text>
        <text x="832" y="1169">las Vegas</text>
        <text x="830" y="1325">Bejucal</text>
        <text x="1160" y="480">Guanabacoa</text>
        <text x="1297" y="827">Cotorro</text>
        <text x="1216" y="1132">Managua</text>
        <text x="1802" y="294">Guanabo</text>
        <text x="1859" y="509">Campo Florido</text>
      </g>
      <g fill="#333">
        <text x="944" y="442" fontSize="40">La Habana</text>
        <text x="1760" y="1164" fontSize="37">San José de</text>
        <text x="1760" y="1212" fontSize="37">Las Lajas</text>
      </g>
      <g fill="#a283b0" fontSize="27" fontStyle="italic">
        <text x="242" y="1019">Bauta</text>
        <text x="1036" y="918">Arroyo</text>
        <text x="1036" y="950">Naranjo</text>
        <text x="1390" y="571">Guanabacoa</text>
        <text x="1307" y="905">Cotorro</text>
      </g>
      <g fill="#7b57bf" fontSize="27" fontStyle="italic">
        <text x="30" y="932" textAnchor="start">eropuerto</text>
        <text x="30" y="964" textAnchor="start">ya Baracoa</text>
      </g>
      <g fill="#94799f" fontSize="27">
        <text transform="translate(136 372) rotate(78)">La Habana</text>
        <text transform="translate(386 800) rotate(80)">Artemisa</text>
        <text transform="translate(1965 166) rotate(-90)">La Habana</text>
      </g>
    </g>
    <g fontFamily="'Noto Sans', sans-serif" fontSize="26" textAnchor="middle">
      <rect x="480" y="677" width="100" height="44" rx="4" fill="#fae4cf" stroke="#c9a484" strokeWidth="3" />
      <text x="531" y="709" fill="#6d4a20">2-101</text>
      <rect x="1390" y="1049" width="106" height="44" rx="4" fill="#fae4cf" stroke="#c9a484" strokeWidth="3" />
      <text x="1444" y="1081" fill="#6d4a20">2-300</text>
      <rect x="1986" y="1247" width="58" height="46" rx="4" fill="#f1b7c7" stroke="#cb6a8b" strokeWidth="3" />
      <text x="2014" y="1280" fill="#83253f">A1</text>
    </g>
  </svg>
);

const clusters = [
  { x: 288, y: 149, n: 18 },
  { x: 397, y: 90, n: 2 },
  { x: 352, y: 163, n: 6 },
  { x: 241, y: 192, n: 5 },
  { x: 318, y: 208, n: 4 },
  { x: 366, y: 206, n: 3 },
  { x: 197, y: 226, n: 5 },
  { x: 159, y: 260, n: 3 },
  { x: 424, y: 268, n: 2 },
  { x: 476, y: 304, n: 2 },
];

const recyclePins = [
  { x: 89, y: 193 },
  { x: 342, y: 70 },
  { x: 351, y: 232 },
  { x: 594, y: 59 },
];

/* Converts a point of the 715 x 450 map area into percentages. */
const at = (x: number, y: number) => ({ left: `${(x / 715) * 100}%`, top: `${(y / 450) * 100}%` });

const RecycleIcon = () => (
  <svg viewBox="0 0 28 28" className="size-7" strokeLinejoin="round" strokeLinecap="round" aria-hidden="true">
    <g fill="none" stroke="#222" strokeWidth="3.400">
      <path d="M9 9.500L13 3Q14 1.500 15 3L18.500 9M24.500 16L26.300 21.500Q27 24.500 24 24.500H20.500M8.500 24.500H4Q1 24.500 2 21.500L3.500 17.500" />
    </g>
    <g fill="#fff" stroke="#222" strokeWidth="1.200">
      <path d="M16 11L22 7.500 22 13.500zM20 21.300V27.700L14.500 24.500zM1 17.500L7.300 19 6.300 12.500z" />
    </g>
    <g fill="none" stroke="#fff" strokeWidth="1.500">
      <path d="M9 9.500L13 3Q14 1.500 15 3L18.500 9M24.500 16L26.300 21.500Q27 24.500 24 24.500H20.500M8.500 24.500H4Q1 24.500 2 21.500L3.500 17.500" />
    </g>
  </svg>
);

const SpannerIcon = () => (
  <svg viewBox="0 0 32 24" className="h-6 w-8" fill="#fff" stroke="#222" strokeWidth="1.400" strokeLinejoin="round" aria-hidden="true">
    <path d="M11 14l10-6.500c-.5-3 1-6 4.500-6.500L27 1.500l-2.500 3 1.500 2 4-1.500c1 4-2 7-6.500 6L12.500 17.500c.5 3.500-2 5.500-5 5.500L6 21.500l2.500-2-1-2.500-3.500.5-2-1c1-4 5.500-5 9-2.500z" />
  </svg>
);

const LeafletMap = () => (
  <section aria-label="Mapa" className="relative mt-[17px] h-[450px] overflow-hidden rounded-[10px]">
    <MapDrawing />
    {clusters.map((c) => (
      <button
        key={`${c.x}-${c.y}`}
        style={at(c.x, c.y)}
        className={`absolute flex -translate-x-1/2 -translate-y-1/2 items-center justify-center rounded-full bg-[#ffa500]/85 font-bold text-[#4a4238] ${c.n > 9 ? "size-[52px] text-[24px]" : "size-[30px] text-[15px]"}`}
      >
        {c.n}
      </button>
    ))}
    {recyclePins.map((p) => (
      <button
        key={`${p.x}-${p.y}`}
        aria-label="Punto de recogida"
        style={at(p.x, p.y)}
        className="absolute flex size-[50px] -translate-x-1/2 -translate-y-1/2 items-center justify-center rounded-full border-4 border-[#b79ccc] bg-[#dccfe7] pb-1"
      >
        <RecycleIcon />
      </button>
    ))}
    <button
      aria-label="Taller de máquinas"
      style={at(383, 295)}
      className="absolute flex size-[50px] -translate-x-1/2 -translate-y-1/2 items-center justify-center rounded-full border-4 border-[#f08c90] bg-[#f8c9cb]"
    >
      <SpannerIcon />
    </button>
    <div className="absolute top-[10px] left-[10px] flex flex-col overflow-hidden rounded-[3px] bg-white shadow-[0_0_3px_rgba(0,0,0,0.5)]">
      <button aria-label="Acercar" className="flex h-[27px] w-[27px] items-center justify-center border-b border-[#ccc] pb-[2px]">
        <svg viewBox="0 0 10 10" className="size-[10px]" stroke="#000" strokeWidth="2"><path d="M0 5h10M5 0v10" /></svg>
      </button>
      <button aria-label="Alejar" className="flex h-[27px] w-[27px] items-center justify-center pb-[2px]">
        <svg viewBox="0 0 10 10" className="size-[10px]" stroke="#000" strokeWidth="2"><path d="M0 5h10" /></svg>
      </button>
    </div>
    <button aria-label="Capas" className="absolute top-[10px] right-[10px] flex size-10 items-center justify-center rounded-[4px] bg-white shadow-[0_0_3px_rgba(0,0,0,0.5)]">
      <svg viewBox="0 0 26 26" className="size-[26px]" aria-hidden="true">
        <path d="M1 17l12-6 12 6-12 7z" fill="#8b8b8b" />
        <path d="M1 14l12-6 12 6-12 7z" fill="#ababab" stroke="#fff" strokeWidth=".7" />
        <path d="M1 10l12-8 12 8-12 7z" fill="#d9d9d9" stroke="#fff" strokeWidth=".7" />
      </svg>
    </button>
    <p className="absolute right-0 bottom-0 bg-white/70 pr-[14px] pl-1 text-[10px] leading-[15px] text-[#333]">
      <a href="#" className="text-[#0078a8]">Leaflet</a> | Map tiles by ©<a href="#" className="text-[#0078a8]">OSM</a>, licence{" "}
      <a href="#" className="text-[#0078a8]">CC BY SA</a>. Data by ©<a href="#" className="text-[#0078a8]">OSM</a> contributors,
    </p>
  </section>
);

/* ---------- Statistics ---------- */

const stats = [
  { value: 53, label: "Puntos de recogida", color: "#800080" },
  { value: 0, label: "Tiendas", color: "#0000ff" },
  { value: 3, label: "Puntos Comunitarios", color: "#008000" },
  { value: 1, label: "Talleres de Maquinas", color: "#ffa500" },
  { value: 3, label: "Colaboradores", color: "#ff0000" },
];

const Donut = ({ value, label, color }: (typeof stats)[number]) => (
  <figure className="grid size-[190px] place-items-center">
    <svg viewBox="0 0 190 190" className="col-start-1 row-start-1 size-full -rotate-90" fill="none" strokeWidth="19" aria-hidden="true">
      <circle cx="95" cy="95" r="85.500" stroke="#ebebeb" />
      {value > 0 && <circle cx="95" cy="95" r="85.500" stroke={color} pathLength="100" strokeDasharray={`${value} 100`} />}
    </svg>
    <figcaption className="col-start-1 row-start-1 flex flex-col items-center pt-[10px]">
      <strong className="text-[42px] leading-[46px]">{value}</strong>
      <span className="text-[13px] leading-4">{label}</span>
    </figcaption>
  </figure>
);

/* ---------- Page ---------- */

export default function App() {
  return (
    <div className="flex min-h-screen gap-px bg-[#f3f3f3] font-['Liberation_Sans',Arial,sans-serif] text-[#333]">
      <Sidebar />
      <div className="min-w-0 flex-1 pb-[39px]">
        <TopBar />
        <main className="rounded-l-[5px] bg-white pt-[37px] pr-12 pb-[85px] pl-[55px] shadow-[0_5px_20px_rgba(0,0,0,0.12)]">
          <div className="flex items-center">
            <MapEmoji className="ml-[2px] h-[22px] w-[26px]" />
            <h1 className="ml-[6px] text-[24px] leading-8 font-bold text-[#1b2a57]">Mapa digital</h1>
            <div className="mr-1 ml-auto flex items-center text-[#ccc]">
              <button aria-label="Plegar"><ChevronDown className="h-[10px] w-[18px]" /></button>
              <button aria-label="Borrar" className="ml-3"><TrashIcon className="h-[18px] w-4" /></button>
              <button aria-label="Cerrar" className="ml-5">
                <svg viewBox="0 0 18 18" className="size-[18px]" stroke="currentColor" strokeWidth="1.800" strokeLinecap="round"><path d="M1 1l16 16M17 1L1 17" /></svg>
              </button>
            </div>
          </div>
          <div className="mt-[5px] flex">
            <span className="h-[21px] rounded-full bg-[#edcc66] px-[12px] text-[12px] leading-[18px]">Project</span>
          </div>
          <button className="mt-[9px] block h-[22px] rounded-full border border-[#ccc] px-[10px] pb-[3px] text-[12px] leading-4 font-bold">Establecer categoría</button>
          <h2 className="mt-[11px] flex items-center gap-[6px] text-[20px] leading-8 font-bold">
            Tareas <Ring className="mt-[2px] size-5" />
          </h2>
          <TaskList />
          <div className="mt-5 flex items-center text-[13px]">
            <button className="flex h-[27px] items-center gap-[5px] rounded-full border border-[#ccc] px-[15px] pb-1 font-bold">
              <svg viewBox="0 0 12 10" className="h-[10px] w-3" stroke="#333" strokeWidth="1.400" aria-hidden="true"><path d="M0 1h2M4 1h8M0 5h2M4 5h8M0 9h2M4 9h8" /></svg>
              Añadir a tareas
            </button>
            <span className="px-1 pb-1">o</span>
            <button className="flex h-[27px] items-center gap-[6px] rounded-full border border-[#e33232] px-[15px] pb-1 font-bold text-[#e33232]">
              <svg viewBox="0 0 11 13" className="h-[13px] w-[11px]" fill="none" stroke="currentColor" strokeWidth="1.300" aria-hidden="true">
                <path d="M1.500 2.500h8v10h-8z" fill="#f6b4b4" />
                <path d="M0 2.500h11M3.500 2.500V.7h4v1.800M4.200 4v7.500M6.800 4v7.500" />
              </svg>
              Archiva proyecto
            </button>
          </div>
          <div className="mt-[33px] grid grid-cols-2">
            <SelectBox id="workspace" label="Espacio de trabajo" options={["Todos los espacios de trabajo"]} className="w-[238px]" />
            <SelectBox id="other" label="Otros espacios" options={["Otros"]} className="w-[165px]" />
          </div>
          <LeafletMap />
          <section aria-label="Estadísticas" className="mt-[62px] flex flex-wrap justify-center gap-x-[29px] gap-y-[31px]">
            {stats.map((s) => <Donut key={s.label} {...s} />)}
          </section>

          <h2 className="mt-[42px] text-[30px] leading-9 font-bold">Resumen</h2>
          <p className="mt-[27px] pr-4 text-[15px] leading-5">Encuentra los espacios de reciclaje cerca de ti para impulsar el reciclaje local de plástico en tu zona.</p>
          <h2 className="mt-6 text-[30px] leading-9 font-bold">Tutorial</h2>
          <h3 className="mt-[25px] flex items-center gap-2 text-[23px] leading-7 font-bold">
            <ChevronDown className="mt-1 h-[10px] w-[17px]" />
            Mapa en la wiki
          </h3>
          <p className="mt-[21px] pr-4 text-[15px] leading-5">Este mapa nos permite identificar geograficamente a los colaboradores de la red. Tambien permite arrojar estadisticas de la informacion aportada.</p>
          <h3 className="mt-[17px] flex items-center gap-2 text-[23px] leading-7 font-bold">
            <ChevronDown className="mt-1 h-[10px] w-[17px]" />
            Exportar datos a Maps.Me
          </h3>
          <p className="mt-5 pr-4 text-[15px] leading-5">Descargamos el archivo de base de datos para Maps.ME</p>
          <button className="mt-[37px] ml-[7px] flex h-[105px] flex-col items-center rounded-[4px] bg-[#808080] px-[6px] pt-6 text-[13px] font-bold text-white">
            <svg viewBox="0 0 23 26" className="h-[26px] w-[23px]" fill="#fff" aria-hidden="true">
              <path d="M0 4.500C0 2 5 .5 11.500.5S23 2 23 4.500v1.800C23 8.500 18 10 11.500 10S0 8.500 0 6.300z" />
              <path d="M0 9c5 3 18 3 23 0v5c-2 4-21 4-23 0z" />
              <path d="M0 16.800c5 3 18 3 23 0v4.700c-1 5-22 5-23 0z" />
            </svg>
            <span className="mt-3">Descargar (.KML)</span>
          </button>
          <ol className="mt-[34px] list-decimal pl-9 text-[15px] leading-5">
            <li>Copiamos el archivo .KML en la carpeta favoritos de Maps.ME (por defecto, maps.me guarda estos archivos en ...).</li>
            <li className="mt-5">Abrimos Maps.ME y activamos la base de datos. Listo!</li>
          </ol>
        </main>
      </div>
    </div>
  );
}
